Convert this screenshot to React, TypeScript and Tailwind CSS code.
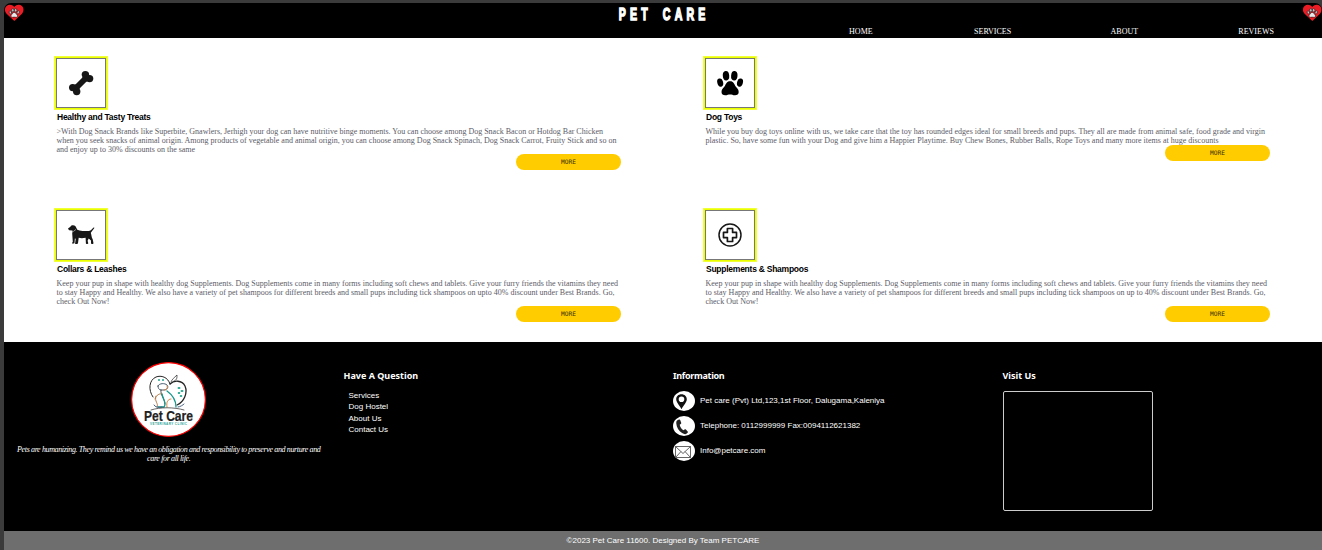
import type { ReactNode } from "react";

const sans = "font-['Liberation_Sans',Arial,sans-serif]";
const serif = "font-['Liberation_Serif','Times_New_Roman',serif]";

function HeartPaw() {
  return (
    <svg viewBox="0 0 20 18" className="h-[18px] w-5">
      <path d="M10.3 17 L2.600 9.800 C.4 7.400.5 3.600 2.600 2 C4.800.1 8.300.5 10.300 3 C12.300.5 15.800.1 17.900 2 C20 3.600 20 7.400 18 9.800Z" fill="#ec1c24" />
      <g fill="#c9cdd0" stroke="#171717" strokeWidth=".7" transform="translate(1.500 2) scale(.85)">
        <ellipse cx="5.700" cy="7.500" rx="1.300" ry="1.900" transform="rotate(-15 5.700 7.500)" />
        <ellipse cx="8.600" cy="5" rx="1.400" ry="2" />
        <ellipse cx="12" cy="5" rx="1.400" ry="2" />
        <ellipse cx="14.900" cy="7.500" rx="1.300" ry="1.900" transform="rotate(15 14.900 7.500)" />
        <path fill="#e8eaec" d="M10.300 7.600c1.900 0 2.100 1.700 3.200 2.700 1.500 1.500.3 3.300-1.300 3-1.300-.3-2.500-.3-3.800 0-1.600.3-2.800-1.500-1.300-3 1.100-1 1.300-2.700 3.200-2.700Z" />
      </g>
    </svg>
  );
}

function Bone() {
  return (
    <svg viewBox="0 0 26 26" className="size-[26px]" fill="#171717">
      <path d="M8 18 18 8" stroke="#171717" strokeWidth="5.800" />
      <circle cx="17.400" cy="4.600" r="3.700" />
      <circle cx="21.600" cy="8.600" r="3.700" />
      <circle cx="4.700" cy="17.600" r="3.700" />
      <circle cx="8.700" cy="21.600" r="3.700" />
      <path d="m15 6 5 5-3 1-3-3ZM6 15l5 5 1-3-3-3Z" />
    </svg>
  );
}

function Paw() {
  return (
    <svg viewBox="0 0 28 26" className="h-[26px] w-7" fill="#000">
      <ellipse cx="4.200" cy="12.600" rx="2.900" ry="4.200" transform="rotate(-15 4.200 12.600)" />
      <ellipse cx="10" cy="5.700" rx="3.200" ry="4.700" transform="rotate(-5 10 5.700)" />
      <ellipse cx="18.300" cy="5.700" rx="3.200" ry="4.700" transform="rotate(5 18.300 5.700)" />
      <ellipse cx="24" cy="12.600" rx="2.900" ry="4.200" transform="rotate(15 24 12.600)" />
      <path d="M14.100 11.300c3.500 0 4.100 2.800 5.400 5 1.300 1.900 3.200 2.900 3.200 5.600 0 2.200-1.700 3.400-3.900 3.300-1.800-.1-3-.8-4.700-.8s-2.900.7-4.700.8c-2.200.1-3.900-1.100-3.900-3.300 0-2.700 1.900-3.700 3.200-5.600 1.300-2.200 1.900-5 5.400-5Z" />
    </svg>
  );
}

function Dog() {
  return (
    <svg viewBox="0 0 28 22" className="h-[22px] w-7">
      <path fill="#171717" d="M1 4.400 3.400 2.700 C4.300 1.100 7 .8 8.500 2.300 L10.300 5.700 C13 7.100 17.500 7 21.500 7.100 C23.300 7 25.100 5 26.300 3.700 C27.200 3 27.600 3.600 27 4.500 L23.800 8.700 C24.600 11 24.400 13 25.700 15.300 L26.500 19.300 C26.500 20.200 23.900 20.200 24 19.300 L24 16.500 L21.700 14.400 L20.600 16.800 L21.300 19.300 C21.300 20.200 18.700 20.200 18.900 19.300 L18.600 13.800 C15.500 14.500 13.500 14.300 11.700 13.800 L11 19.300 C11 20.200 7.900 20.200 8.100 19.400 L8.700 14.700 L7.900 14.600 L7.500 18.900 C7.300 19.700 4.700 19.700 4.900 18.900 L5.800 17.900 L5.200 9.500 L5.700 6.800 C4.500 6.400 3.500 6.500 2 6.300Z" />
      <path d="m6.200 7.600 2.800-2.200" stroke="#fff" strokeWidth=".5" />
    </svg>
  );
}

function Medical() {
  return (
    <svg viewBox="0 0 24 24" className="h-6 w-6" fill="none" stroke="#171717" strokeWidth="1.500">
      <circle cx="12" cy="12" r="11" />
      <path strokeLinejoin="round" strokeWidth="1.700" d="M9.400 5.500h5.200v3.900h3.900v5.200h-3.900v3.900H9.400v-3.900H5.500V9.400h3.900Z" />
    </svg>
  );
}

type Item = { title: string; icon: ReactNode; lines: string[] };

const items: Item[] = [
  {
    title: "Healthy and Tasty Treats",
    icon: <Bone />,
    lines: [
      ">With Dog Snack Brands like Superbite, Gnawlers, Jerhigh your dog can have nutritive binge moments. You can choose among Dog Snack Bacon or Hotdog Bar Chicken",
      "when you seek snacks of animal origin. Among products of vegetable and animal origin, you can choose among Dog Snack Spinach, Dog Snack Carrot, Fruity Stick and so on",
      "and enjoy up to 30% discounts on the same",
    ],
  },
  {
    title: "Dog Toys",
    icon: <Paw />,
    lines: [
      "While you buy dog toys online with us, we take care that the toy has rounded edges ideal for small breeds and pups. They all are made from animal safe, food grade and virgin",
      "plastic. So, have some fun with your Dog and give him a Happier Playtime. Buy Chew Bones, Rubber Balls, Rope Toys and many more items at huge discounts",
    ],
  },
  {
    title: "Collars & Leashes",
    icon: <Dog />,
    lines: [
      "Keep your pup in shape with healthy dog Supplements. Dog Supplements come in many forms including soft chews and tablets. Give your furry friends the vitamins they need",
      "to stay Happy and Healthy. We also have a variety of pet shampoos for different breeds and small pups including tick shampoos on upto 40% discount under Best Brands. Go,",
      "check Out Now!",
    ],
  },
  {
    title: "Supplements & Shampoos",
    icon: <Medical />,
    lines: [
      "Keep your pup in shape with healthy dog Supplements. Dog Supplements come in many forms including soft chews and tablets. Give your furry friends the vitamins they need",
      "to stay Happy and Healthy. We also have a variety of pet shampoos for different breeds and small pups including tick shampoos on up to 40% discount under Best Brands. Go,",
      "check Out Now!",
    ],
  },
];

function Card({ item }: { item: Item }) {
  return (
    <article className="flex h-[152px] w-[565px] flex-col">
      <div className="flex size-[50px] items-center justify-center border border-[#777] bg-white shadow-[0_0_0_1px_#eaff00,0_0_0_2px_#f0ff38]">
        {item.icon}
      </div>
      <h2 className={`${sans} mt-1 h-[15px] pl-px text-[8.500px] leading-[11px] font-bold tracking-[-0.250px] text-black`}>
        {item.title}
      </h2>
      <p className={`${serif} pl-[0.500px] text-[8px] leading-[9px] text-[#5c5c68]`}>
        {item.lines.map((l) => (
          <span key={l} className="block whitespace-nowrap">{l}</span>
        ))}
      </p>
      <button className="h-4 w-[105px] shrink-0 self-end rounded-full bg-[#ffcc00] pb-px font-['DejaVu_Sans_Mono',monospace] text-[6.200px] leading-[15px] text-[#3a2f00]">
        MORE
      </button>
    </article>
  );
}

function Logo() {
  return (
    <svg viewBox="0 0 75 75" className="size-[75px]">
      <circle cx="37.500" cy="37.500" r="36.900" fill="#fff" stroke="#f00" strokeWidth="1.200" />
      <g fill="none" stroke="#252525" strokeWidth="1" strokeLinecap="round">
        <path d="M22 35C17 28 18 18 25 15c5-2 12 0 14 7" />
        <path d="M39 22c4-4 12-4 15 2 3 7-1 16-8 19" strokeWidth="1.300" />
        <path d="M40 20c1-3 3-4 6-7 0 3 0 5-3 6" strokeWidth=".7" />
        <path d="M27 24c1-3 7-3 9-1 2 2 0 5-3 5h-3c-2 0-3-2-3-4Z" strokeWidth=".9" stroke="#354b60" />
        <path d="M30 28c-1 5 4 9 4 14" strokeWidth=".8" />
        <path d="M24 37c1-4 5-6 7-5M25 34c-2 6 3 7 1 11" stroke="#b57b4a" />
        <path d="M36 29c7 5 9 10 9 16M31 32c1 5 5 10 2 13h-6" stroke="#16978b" strokeWidth="1.300" />
        <path d="M36 45c-1-5 1-8 4-8M33 28c3 0 4-2 3-4" stroke="#d68444" />
        <path d="M23 43c1 2 4 3 8 2M47 45c2 0 5-2 6-3" stroke="#4c6687" />
        <path d="M20 48c9-3 23-3 33 0" strokeWidth=".7" />
      </g>
      <g fill="#20a58e">
        <circle cx="28" cy="18" r="1" /><circle cx="32" cy="18" r="1" />
        <ellipse cx="48" cy="26" rx="1.500" ry="1" /><ellipse cx="51" cy="29" rx="1.500" ry="1" />
        <ellipse cx="48" cy="31" rx="1.300" ry="1" /><ellipse cx="50" cy="34" rx="1.300" ry="1" />
      </g>
      <text x="13" y="58.500" textLength="49" lengthAdjust="spacingAndGlyphs" className="font-['Liberation_Sans',sans-serif] text-[14px] font-bold" fill="#222" stroke="#222" strokeWidth=".2">Pet Care</text>
      <text x="19" y="62.800" textLength="37" className="font-['Liberation_Sans',sans-serif] text-[3px] font-bold" fill="#2aa397">VETERINARY CLINIC</text>
    </svg>
  );
}

function Pin() {
  return (
    <svg viewBox="0 0 22 20" className="h-5 w-[22px]">
      <path fillRule="evenodd" fill="#111" d="M8.500 3.200c3.200 0 5.300 2.200 5.300 5 0 3.200-3.400 6-5.300 10-1.900-4-5.300-6.800-5.300-10 0-2.800 2.100-5 5.300-5Zm0 2.200a2.800 2.800 0 1 0 0 5.600 2.800 2.800 0 0 0 0-5.600Z" />
    </svg>
  );
}

function Phone() {
  return (
    <svg viewBox="0 0 22 20" className="h-5 w-[22px]">
      <path fill="#222" d="M4.400 4.300 6 3.600c.7-.2 1.100 0 1.300.6l.9 2.500c.2.600 0 1-.5 1.300l-1 .7c.5 2.400 1.800 4.300 3.700 5.500l1.200-.8c.5-.3.9-.2 1.300.2l1.800 2c.3.400.3.900-.1 1.200l-1.200 1c-1 .7-2.600.4-4.300-.7C5.800 15 3.500 11.300 3.300 7.500c-.1-1.700.3-2.800 1.100-3.200Z" />
    </svg>
  );
}

function Envelope() {
  return (
    <svg viewBox="0 0 22 20" className="h-5 w-[22px]" fill="none" stroke="#666" strokeWidth="1">
      <rect x="2.500" y="5.500" width="15" height="11" />
      <path d="m2.500 5.500 7.500 7 7.500-7M2.500 16.500l5.500-6M17.500 16.500l-5.500-6" />
    </svg>
  );
}

const contacts: { icon: ReactNode; text: string }[] = [
  { icon: <Pin />, text: "Pet care (Pvt) Ltd,123,1st Floor, Dalugama,Kaleniya" },
  { icon: <Phone />, text: "Telephone: 0112999999 Fax:0094112621382" },
  { icon: <Envelope />, text: "Info@petcare.com" },
];

function Heading({ children, className = "" }: { children: ReactNode; className?: string }) {
  return <h3 className={`font-['Noto_Sans',sans-serif] text-[9px] leading-3 font-bold ${className}`}>{children}</h3>;
}

export default function App() {
  return (
    <div className="h-[550px] w-[1322px] overflow-hidden bg-[#3b3b3b] pt-[3px] pl-1">
      <div className="flex h-[547px] flex-col overflow-hidden rounded-t-[7px] bg-black">
        <header className="flex h-[35px] shrink-0 flex-col text-white">
          <div className="flex h-[22px] items-start justify-between">
            <div className="pt-px"><HeartPaw /></div>
            <h1 className={`${sans} ml-[2px] scale-x-[.62] pt-[3px] text-[17px] leading-[17px] font-bold tracking-[6.800px] [word-spacing:6px] [-webkit-text-stroke:1.500px_white]`}>
              PET CARE
            </h1>
            <div className="pt-px"><HeartPaw /></div>
          </div>
          <nav className={`${serif} grid w-[527px] grid-cols-4 self-end pt-px text-center text-[8px] leading-3`}>
            <a>HOME</a>
            <a>SERVICES</a>
            <a>ABOUT</a>
            <a>REVIEWS</a>
          </nav>
        </header>

        <main className="grid h-[304px] shrink-0 grid-cols-[565px_565px] content-start gap-x-[84px] bg-white pt-5 pl-[52px]">
          {items.map((item) => <Card key={item.title} item={item} />)}
        </main>

        <footer className={`${sans} grid h-[189px] shrink-0 grid-cols-4 text-[8px] text-white`}>
          <section className="flex flex-col items-center pt-5">
            <Logo />
            <p className="mt-2 text-center font-['Liberation_Serif',cursive] text-[8px] leading-[9px] tracking-[-0.370px] italic">
              <span className="block whitespace-nowrap">Pets are humanizing. They remind us we have an obligation and responsibility to preserve and nurture and</span>
              <span className="block">care for all life.</span>
            </p>
          </section>
          <section className="pt-7 pl-[10px]">
            <Heading>Have A Question</Heading>
            <ul className="mt-2 pl-[5px] leading-[11.400px]">
              <li>Services</li>
              <li>Dog Hostel</li>
              <li>About Us</li>
              <li>Contact Us</li>
            </ul>
          </section>
          <section className="pt-7 pl-[10px]">
            <Heading className="tracking-[-0.300px]">Information</Heading>
            <ul className="mt-[9px] flex flex-col gap-[5px]">
              {contacts.map((c) => (
                <li key={c.text} className="flex h-5 items-center gap-[5px]">
                  <span className="h-5 w-[22px] overflow-hidden rounded-[50%] bg-white">{c.icon}</span>
                  <span className="whitespace-nowrap">{c.text}</span>
                </li>
              ))}
            </ul>
          </section>
          <section className="pt-7 pl-[10px]">
            <Heading>Visit Us</Heading>
            <div className="mt-[9px] h-[120px] w-[150px] rounded-[2px] border border-[#ccc]" />
          </section>
        </footer>

        <div className={`${sans} flex h-[19px] shrink-0 items-center justify-center bg-[#6e6e6e] text-[8px] text-white`}>
          ©2023 Pet Care 11600. Designed By Team PETCARE
        </div>
      </div>
    </div>
  );
}
